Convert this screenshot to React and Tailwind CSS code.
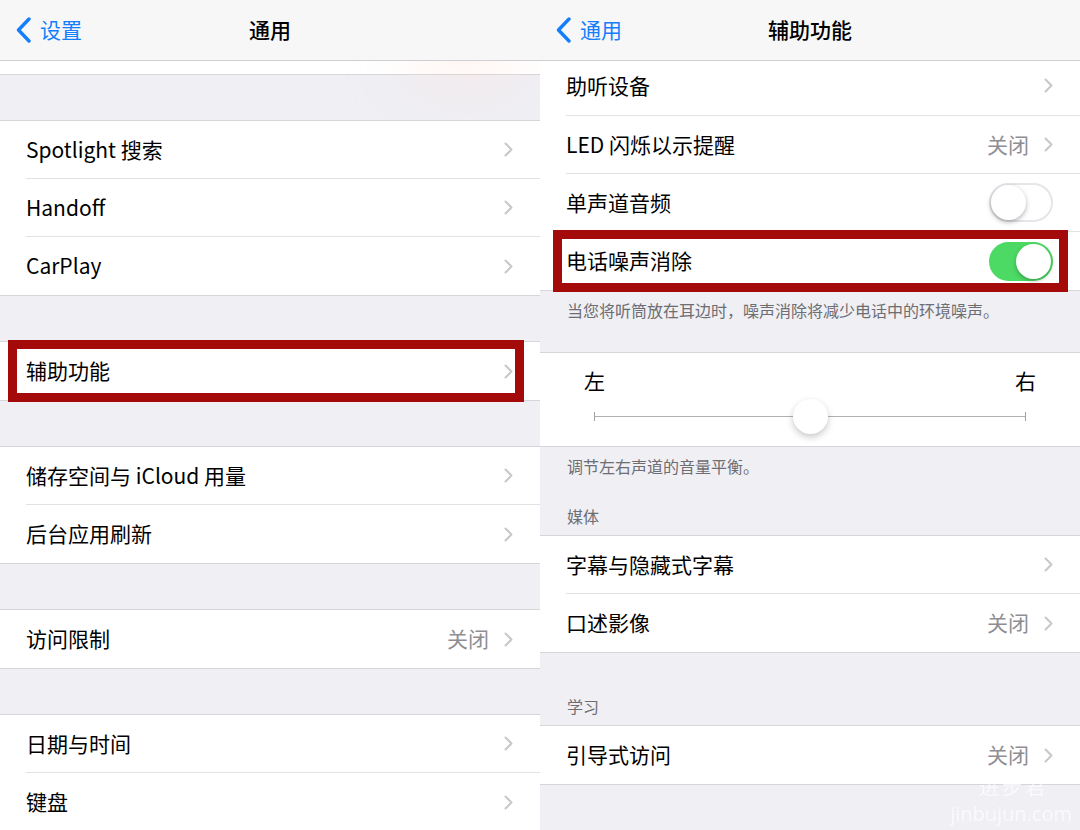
import React from 'react';

const font = { fontFamily: '"Noto Sans CJK SC", "Noto Sans", sans-serif' };

const Chevron = () => (
  <svg width="9" height="15" viewBox="0 0 9 15" className="shrink-0">
    <path d="M1.5 1.5 L7.5 7.5 L1.5 13.5" fill="none" stroke="#c7c7cc" strokeWidth="2" strokeLinecap="round" strokeLinejoin="round" />
  </svg>
);

const BackChevron = () => (
  <svg width="18" height="26" viewBox="0 0 18 26">
    <path d="M14 2 L3.5 13 L14 24" fill="none" stroke="#147efb" strokeWidth="3.4" strokeLinecap="round" strokeLinejoin="round" />
  </svg>
);

const NavBar = ({ back, title }) => (
  <div className="relative h-[61px] shrink-0 bg-[#f7f7f8] border-b border-[#cfcfd3] flex items-center">
    <div className="flex items-center pl-[15px] gap-[7px] text-[21px] text-[#147efb]">
      <BackChevron />
      <span>{back}</span>
    </div>
    <div className="absolute inset-0 flex items-center justify-center pointer-events-none">
      <span className="text-[21px] font-medium text-black">{title}</span>
    </div>
  </div>
);

const Switch = ({ on }) =>
  on ? (
    <div className="w-[64px] h-[39px] rounded-full bg-[#4cd964] flex items-center justify-end pr-[2px] shrink-0">
      <div className="w-[35px] h-[35px] rounded-full bg-white shadow-[0_2px_4px_rgba(0,0,0,0.25)]" />
    </div>
  ) : (
    <div className="w-[64px] h-[39px] rounded-full bg-white border-2 border-[#e5e5ea] flex items-center shrink-0">
      <div className="w-[35px] h-[35px] rounded-full bg-white shadow-[0_2px_5px_rgba(0,0,0,0.3)]" />
    </div>
  );

const Row = ({ label, value, chevron = true, toggle, last, h = 'h-[58px]', inner = '', children }) => (
  <div className={`relative ${h} flex pl-[26px] bg-white`}>
    <div className={`flex-1 flex items-center pr-[27px] ${inner} ${last ? '' : 'border-b border-[#e2e2e5]'}`}>
      <span className="flex-1 text-[21px] text-black">{label}</span>
      {value && <span className="text-[21px] text-[#8e8e93] mr-[15px]">{value}</span>}
      {toggle !== undefined ? <Switch on={toggle} /> : chevron && <Chevron />}
    </div>
    {children}
  </div>
);

const Group = ({ children, top = true }) => (
  <div className={`bg-white border-b border-[#d6d6da] ${top ? 'border-t' : ''}`}>{children}</div>
);

const Highlight = ({ left, width }) => (
  <div
    className={`absolute top-[-2px] h-[62px] border-[9px] border-[#a50a0a] pointer-events-none ${left} ${width}`}
  />
);

const Gap = () => <div className="h-[45px] shrink-0" />;

const Note = ({ children, pt = 'pt-[8px]', className = '' }) => (
  <div className={`pl-[27px] ${pt} text-[16px] leading-[22px] text-[#6d6d72] ${className}`}>{children}</div>
);

const LeftPanel = () => (
  <div className="relative w-[540px] h-[830px] overflow-hidden bg-[#efeff4] flex flex-col">
    <div className="absolute left-[420px] top-[10px] w-[90px] h-[60px] rounded-full bg-[#ffd9cf] opacity-60 blur-2xl" />
    <NavBar back="设置" title="通用" />
    <div className="h-[14px] bg-white border-b border-[#d6d6da] shrink-0" />
    <Gap />
    <Group>
      <Row label="Spotlight 搜索" />
      <Row label="Handoff" />
      <Row label="CarPlay" last />
    </Group>
    <Gap />
    <Group>
      <Row label="辅助功能" last>
        <Highlight left="left-[8px]" width="w-[516px]" />
      </Row>
    </Group>
    <Gap />
    <Group>
      <Row label="储存空间与 iCloud 用量" />
      <Row label="后台应用刷新" last />
    </Group>
    <Gap />
    <Group>
      <Row label="访问限制" value="关闭" last />
    </Group>
    <Gap />
    <Group>
      <Row label="日期与时间" />
      <Row label="键盘" last />
    </Group>
  </div>
);

const BalanceSlider = () => (
  <div className="bg-white border-y border-[#d6d6da] h-[95px] px-[44px] pt-[12px]">
    <div className="flex justify-between text-[21px] text-black leading-[30px]">
      <span>左</span>
      <span>右</span>
    </div>
    <div className="relative mt-[21px] mx-[10px] h-[2px]">
      <div className="absolute left-0 right-0 top-0 h-[1px] bg-[#b0b0b4]" />
      <div className="absolute left-0 top-[-4px] w-[1px] h-[9px] bg-[#a0a0a4]" />
      <div className="absolute right-0 top-[-4px] w-[1px] h-[9px] bg-[#a0a0a4]" />
      <div className="absolute left-1/2 top-[-17px] -ml-[17px] w-[35px] h-[35px] rounded-full bg-white shadow-[0_3px_7px_rgba(0,0,0,0.22)]" />
    </div>
  </div>
);

const RightPanel = () => (
  <div className="relative w-[540px] h-[830px] overflow-hidden bg-[#efeff4] flex flex-col">
    <NavBar back="通用" title="辅助功能" />
    <Group top={false}>
      <Row label="助听设备" h="h-[55px]" inner="pb-[5px]" />
      <Row label="LED 闪烁以示提醒" value="关闭" />
      <Row label="单声道音频" toggle={false} />
      <Row label="电话噪声消除" toggle={true} last>
        <Highlight left="left-[13px]" width="w-[515px]" />
      </Row>
    </Group>
    <Note className="h-[61px] shrink-0">当您将听筒放在耳边时，噪声消除将减少电话中的环境噪声。</Note>
    <BalanceSlider />
    <div className="h-[88px] shrink-0">
      <Note>调节左右声道的音量平衡。</Note>
      <Note pt="pt-[28px]">媒体</Note>
    </div>
    <Group>
      <Row label="字幕与隐藏式字幕" />
      <Row label="口述影像" value="关闭" last />
    </Group>
    <div className="h-[72px] shrink-0">
      <Note pt="pt-[42px]">学习</Note>
    </div>
    <Group>
      <Row label="引导式访问" value="关闭" last />
    </Group>
    <div className="absolute right-[8px] bottom-[2px] flex flex-col items-end text-white/70 pointer-events-none">
      <span className="block text-[20px] leading-[26px] mr-[24px] tracking-[3px]">进步君</span>
      <span className="block text-[20px] leading-[28px]" style={{ fontFamily: '"Open Sans", sans-serif' }}>jinbujun.com</span>
    </div>
  </div>
);

export default function App() {
  return (
    <div className="w-[1080px] h-[830px] flex overflow-hidden" style={font}>
      <LeftPanel />
      <RightPanel />
    </div>
  );
}
